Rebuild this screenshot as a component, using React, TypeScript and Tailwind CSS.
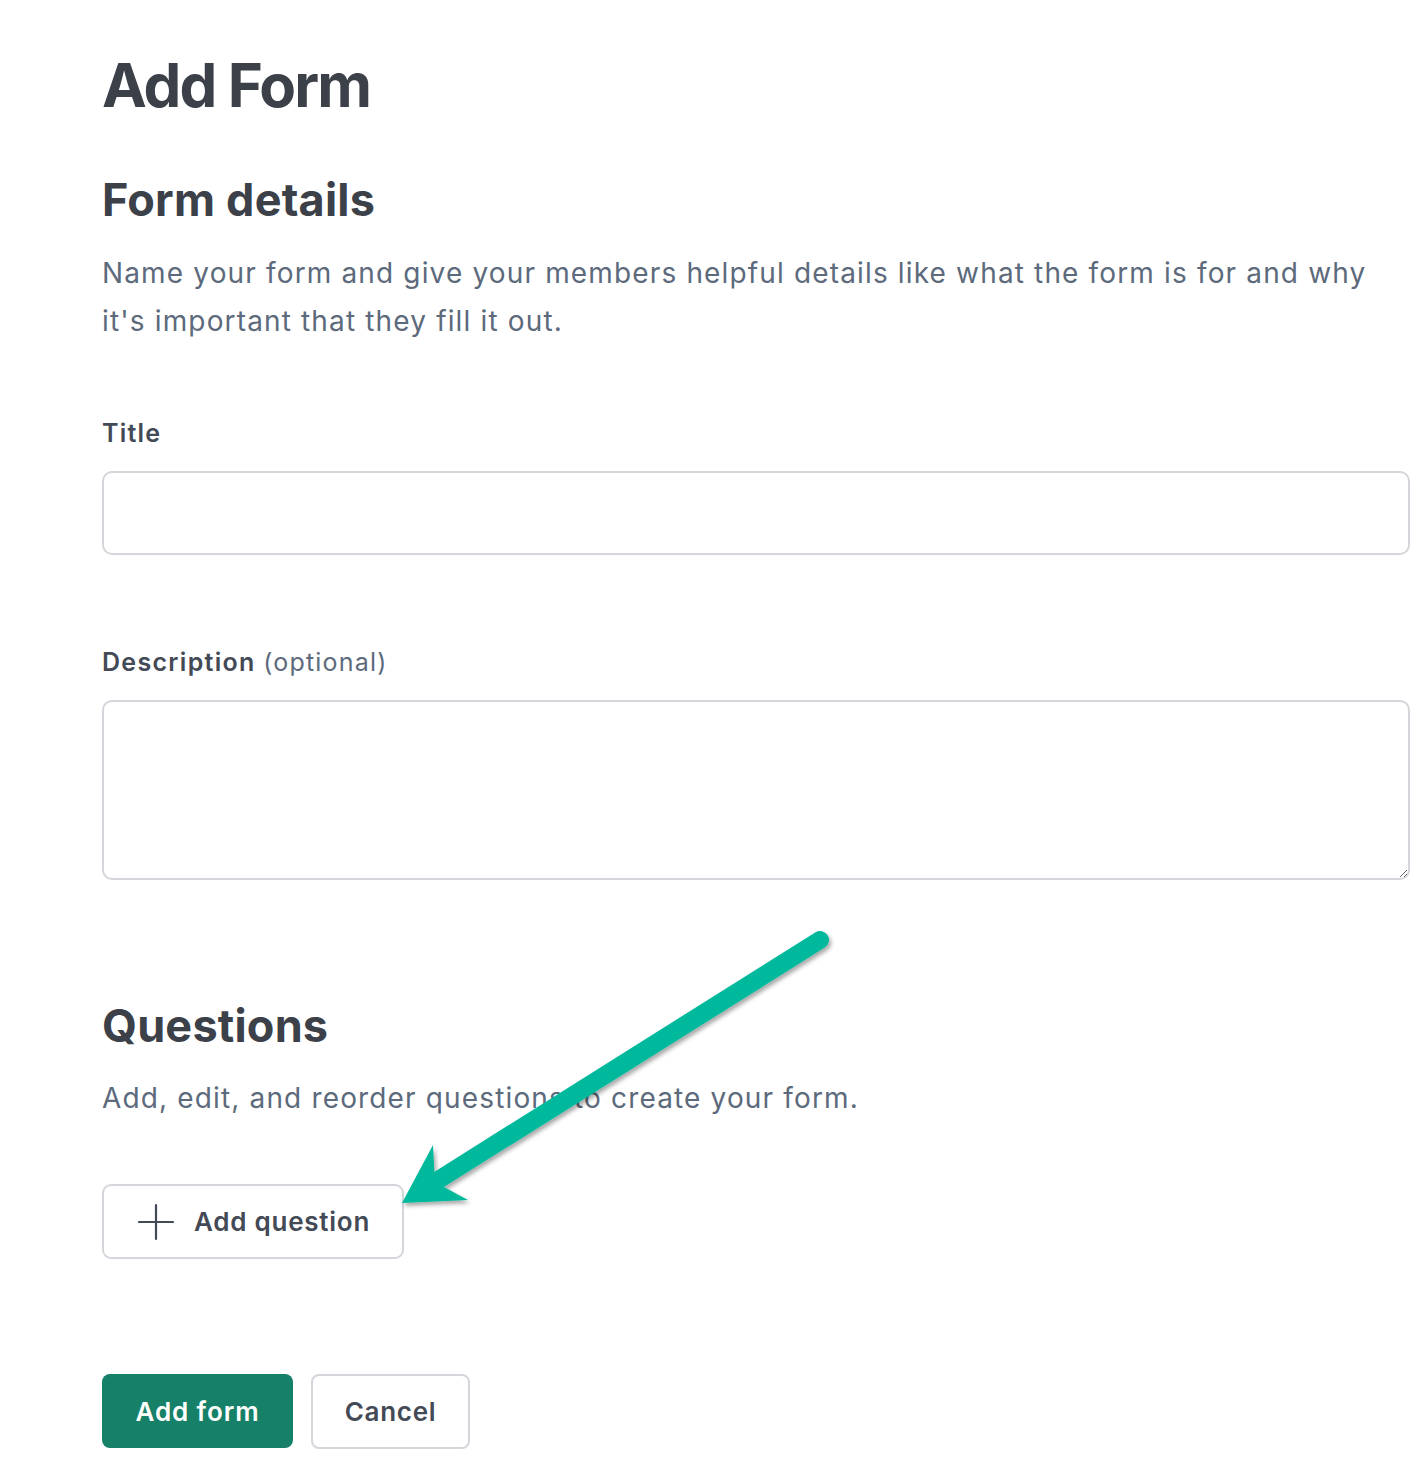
import React from "react";

export default function App() {
  return (
    <div className="relative min-h-[1478px] w-[1416px] overflow-hidden bg-white" style={{ fontFamily: "Inter, 'Noto Sans', sans-serif" }}>
      <div className="pl-[102px] pr-[6px] pt-[49px]">
        <h1 className="text-[60px] leading-[72px] font-bold tracking-[-1.9px] text-[#3c4049]">Add Form</h1>
        <h2 className="mt-[52px] text-[45px] leading-[54px] font-bold tracking-[0.2px] text-[#3c4049]">Form details</h2>
        <p className="mt-[22px] text-[28px] leading-[48px] tracking-[1.15px] text-[#5c6a7c]">
          Name your form and give your members helpful details like what the form is for and why it's important that they fill it out.
        </p>

        <label className="mt-[73px] block text-[25px] leading-[30px] font-semibold tracking-[1.2px] text-[#434a56]">Title</label>
        <input type="text" className="mt-[23px] block h-[84px] w-full rounded-[10px] border-2 border-[#d3d6db] bg-white px-4 text-[26px] outline-none" />

        <label className="mt-[92px] block text-[25px] leading-[30px] font-semibold tracking-[1.3px] text-[#434a56]">
          Description <span className="font-normal tracking-[1.2px] text-[#5c6a7c]">(optional)</span>
        </label>
        <textarea className="mt-[23px] block h-[180px] w-full rounded-[10px] border-2 border-[#d3d6db] bg-white px-4 py-3 text-[26px] outline-none" />

        <h2 className="mt-[119px] text-[45px] leading-[54px] font-bold tracking-[0.2px] text-[#3c4049]">Questions</h2>
        <p className="mt-[21px] text-[28px] leading-[48px] tracking-[1.15px] text-[#5c6a7c]">Add, edit, and reorder questions to create your form.</p>

        <button className="mt-[62px] flex h-[75px] w-[302px] items-center gap-[19px] rounded-[9px] border-2 border-[#d3d6db] bg-white pl-[33px] text-[26px] font-semibold tracking-[0.75px] text-[#434a56]">
          <svg width="38" height="38" viewBox="0 0 38 38" className="shrink-0">
            <path d="M19 2 V36 M2 19 H36" stroke="#434a56" strokeWidth="2.2" strokeLinecap="round" />
          </svg>
          <span>Add question</span>
        </button>

        <div className="mt-[115px] flex gap-[18px]">
          <button className="flex h-[74px] w-[191px] items-center justify-center rounded-[8px] bg-[#168069] text-[26px] font-semibold tracking-[0.9px] text-white">Add form</button>
          <button className="flex h-[75px] w-[159px] items-center justify-center rounded-[8px] border-2 border-[#d3d6db] bg-white text-[26px] font-semibold tracking-[0.7px] text-[#434a56]">Cancel</button>
        </div>
      </div>

      <svg className="pointer-events-none absolute left-0 top-0" width="1416" height="1478" viewBox="0 0 1416 1478">
        <defs>
          <filter id="sh" x="-20%" y="-20%" width="140%" height="140%">
            <feDropShadow dx="2" dy="3" stdDeviation="2" floodColor="#000" floodOpacity="0.35" />
          </filter>
        </defs>
        <g filter="url(#sh)">
          <line x1="820" y1="940" x2="439" y2="1179.5" stroke="#06b99d" strokeWidth="18" strokeLinecap="round" />
          <polygon points="402,1203 433,1145 434.4,1171.9 444,1187.1 468,1200" fill="#06b99d" />
        </g>
      </svg>
    </div>
  );
}
